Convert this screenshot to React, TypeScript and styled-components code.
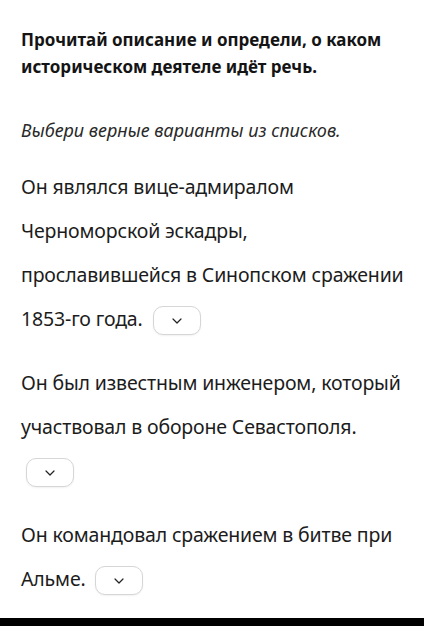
import styled, { createGlobalStyle } from 'styled-components';

const GlobalStyle = createGlobalStyle`
  html, body {
    margin: 0;
    padding: 0;
    background: #ffffff;
  }

  body {
    font-family: 'Noto Sans', 'Open Sans', sans-serif;
    color: #1c1c1c;
  }
`;

const Page = styled.div`
  display: flex;
  flex-direction: column;
  height: 626px;
  overflow: hidden;
`;

const Content = styled.main`
  flex: 1;
  padding: 21px 12px 0 21px;
  display: flex;
  flex-direction: column;
`;

const Title = styled.h2`
  margin: 5px 0 0;
  font-size: 17px;
  font-weight: 700;
  line-height: 27px;
  color: #141414;
`;

const Hint = styled.p`
  margin: 37px 0 0;
  font-size: 18px;
  font-style: italic;
  line-height: 26px;
  color: #2a2a2a;
`;

const Statement = styled.p<{ $gap: number }>`
  margin: ${({ $gap }) => $gap}px 0 0;
  font-size: 19.5px;
  letter-spacing: -0.15px;
  line-height: 44px;
  color: #1c1c1c;
`;

const Select = styled.button`
  display: inline-flex;
  align-items: center;
  justify-content: center;
  width: 48px;
  height: 29px;
  margin: 0 0 0 5px;
  padding: 0;
  vertical-align: middle;
  background: #ffffff;
  border: 1px solid #d6d6d6;
  border-radius: 10px;
  box-shadow: 0 1px 2px rgba(0, 0, 0, 0.06);
  cursor: pointer;

  svg {
    width: 10px;
    height: 6px;
  }
`;

const Footer = styled.div`
  height: 8px;
  background: #000000;
`;

const Chevron = () => (
  <svg viewBox="0 0 10 6" fill="none">
    <path d="M1 1 5 5 9 1" stroke="#222" strokeWidth="1.2" strokeLinecap="round" strokeLinejoin="round" />
  </svg>
);

const Dropdown = () => (
  <Select type="button" aria-label="Выбрать">
    <Chevron />
  </Select>
);

const App = () => {
  return (
    <Page>
      <GlobalStyle />
      <Content>
        <Title>Прочитай описание и определи, о каком историческом деятеле идёт речь.</Title>
        <Hint>Выбери верные варианты из списков.</Hint>

        <Statement $gap={22}>
          Он являлся вице-адмиралом
          <br />
          Черноморской эскадры,
          <br />
          прославившейся в Синопском сражении
          <br />
          1853-го года. <Dropdown />
        </Statement>

        <Statement $gap={20}>
          Он был известным инженером, который участвовал в обороне Севастополя. <Dropdown />
        </Statement>

        <Statement $gap={20}>
          Он командовал сражением в битве при Альме. <Dropdown />
        </Statement>
      </Content>
      <Footer />
    </Page>
  );
};

export default App;
